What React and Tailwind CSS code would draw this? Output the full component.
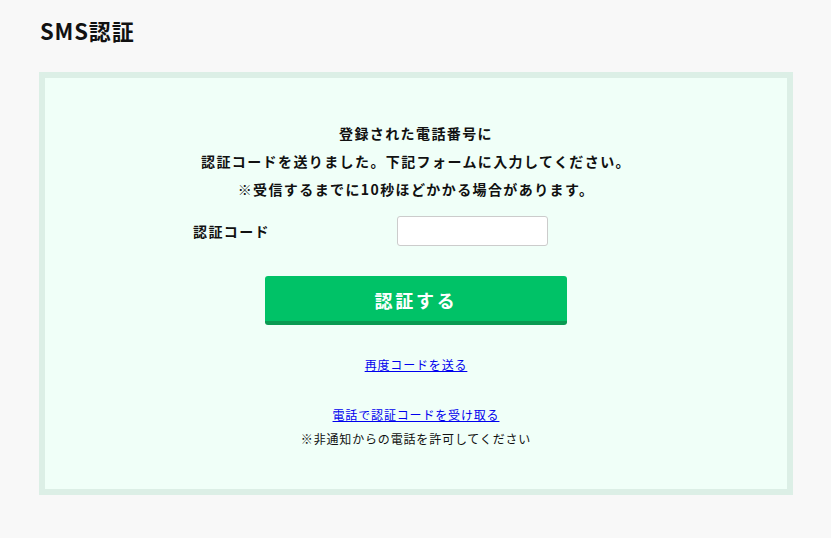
export default function App() {
  return (
    <div
      className="min-h-screen bg-[#f8f8f8] px-[39px] pt-[14px] pb-10 text-[#111]"
      style={{ fontFamily: '"Noto Sans CJK JP", "Noto Sans", sans-serif' }}
    >
      <h1 className="pl-px text-[22px] font-bold leading-[32px] tracking-[0.04em]">SMS認証</h1>

      <div className="mt-[26px] w-[754px] border-[6px] border-[#dcefe6] bg-[#f0fff8] pt-[41px] pb-[40px]">
        <div className="text-center text-[14px] font-bold leading-[28px] tracking-[0.1em]">
          <p>登録された電話番号に</p>
          <p>認証コードを送りました。下記フォームに入力してください。</p>
          <p>※受信するまでに10秒ほどかかる場合があります。</p>
        </div>

        <div className="mx-auto mt-[13px] flex w-[446px] items-center">
          <label className="w-[204px] text-[14px] font-bold tracking-[0.1em]">認証コード</label>
          <input
            type="text"
            className="h-[30px] w-[151px] rounded-[3px] border border-[#cccccc] bg-white px-2 text-[14px] outline-none"
          />
        </div>

        <div className="mt-[30px] flex justify-center">
          <button
            type="button"
            className="h-[49px] w-[302px] rounded-[3px] border-b-4 border-[#0a9a52] bg-[#00c267] pt-[3px] text-[18px] font-bold tracking-[0.15em] text-white"
          >
            認証する
          </button>
        </div>

        <div className="mt-[30px] text-center text-[12px] leading-[20px] tracking-[0.07em]">
          <a href="#" className="text-[#0000ee] underline">
            再度コードを送る
          </a>
        </div>

        <div className="mt-[30px] text-center text-[12px] leading-[20px] tracking-[0.07em]">
          <a href="#" className="text-[#0000ee] underline">
            電話で認証コードを受け取る
          </a>
          <p className="mt-[4px] text-[#111]">※非通知からの電話を許可してください</p>
        </div>
      </div>
    </div>
  );
}
